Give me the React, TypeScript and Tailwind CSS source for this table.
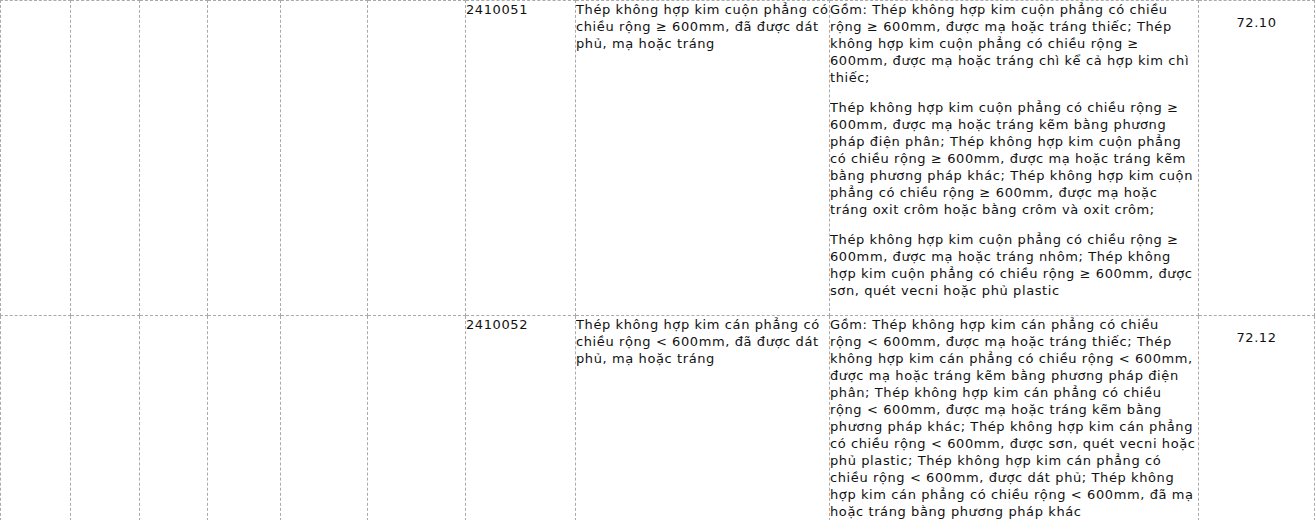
import React from 'react';

interface Row {
  code: string;
  name: string;
  // each paragraph is a list of its printed lines
  parts: string[][];
  hs: string;
}

const rows: Row[] = [
  {
    code: '2410051',
    name: 'Thép không hợp kim cuộn phẳng có chiều rộng ≥ 600mm, đã được dát phủ, mạ hoặc tráng',
    parts: [
      [
        'Gồm: Thép không hợp kim cuộn phẳng có chiều',
        'rộng ≥ 600mm, được mạ hoặc tráng thiếc; Thép',
        'không hợp kim cuộn phẳng có chiều rộng ≥',
        '600mm, được mạ hoặc tráng chì kể cả hợp kim chì',
        'thiếc;',
      ],
      [
        'Thép không hợp kim cuộn phẳng có chiều rộng ≥',
        '600mm, được mạ hoặc tráng kẽm bằng phương',
        'pháp điện phân; Thép không hợp kim cuộn phẳng',
        'có chiều rộng ≥ 600mm, được mạ hoặc tráng kẽm',
        'bằng phương pháp khác; Thép không hợp kim cuộn',
        'phẳng có chiều rộng ≥ 600mm, được mạ hoặc',
        'tráng oxit crôm hoặc bằng crôm và oxit crôm;',
      ],
      [
        'Thép không hợp kim cuộn phẳng có chiều rộng ≥',
        '600mm, được mạ hoặc tráng nhôm; Thép không',
        'hợp kim cuộn phẳng có chiều rộng ≥ 600mm, được',
        'sơn, quét vecni hoặc phủ plastic',
      ],
    ],
    hs: '72.10',
  },
  {
    code: '2410052',
    name: 'Thép không hợp kim cán phẳng có chiều rộng < 600mm, đã được dát phủ, mạ hoặc tráng',
    parts: [
      [
        'Gồm: Thép không hợp kim cán phẳng có chiều',
        'rộng < 600mm, được mạ hoặc tráng thiếc; Thép',
        'không hợp kim cán phẳng có chiều rộng < 600mm,',
        'được mạ hoặc tráng kẽm bằng phương pháp điện',
        'phân; Thép không hợp kim cán phẳng có chiều',
        'rộng < 600mm, được mạ hoặc tráng kẽm bằng',
        'phương pháp khác; Thép không hợp kim cán phẳng',
        'có chiều rộng < 600mm, được sơn, quét vecni hoặc',
        'phủ plastic; Thép không hợp kim cán phẳng có',
        'chiều rộng < 600mm, được dát phủ; Thép không',
        'hợp kim cán phẳng có chiều rộng < 600mm, đã mạ',
        'hoặc tráng bằng phương pháp khác',
      ],
    ],
    hs: '72.12',
  },
];

const cell = 'border border-dashed border-[#aaaaaa] p-0 align-top';

const Lines: React.FC<{ lines: string[] }> = ({ lines }) => (
  <>
    {lines.map((l, i) => (
      <React.Fragment key={i}>
        {i > 0 && <br />}
        {l}
      </React.Fragment>
    ))}
  </>
);

const App: React.FC = () => {
  return (
    <div className="bg-white h-[520px] overflow-hidden font-['DejaVu_Sans',Verdana,sans-serif] text-[13px] leading-[17px] tracking-[0.6px] text-[#111]">
      <table className="table-fixed border-collapse w-[1314px]">
        <colgroup>
          <col className="w-[70px]" />
          <col className="w-[69px]" />
          <col className="w-[68px]" />
          <col className="w-[73px]" />
          <col className="w-[87px]" />
          <col className="w-[98px]" />
          <col className="w-[110px]" />
          <col className="w-[254px]" />
          <col className="w-[369px]" />
          <col className="w-[116px]" />
        </colgroup>
        <tbody>
          {rows.map((row) => (
            <tr key={row.code}>
              <td className={cell}></td>
              <td className={cell}></td>
              <td className={cell}></td>
              <td className={cell}></td>
              <td className={cell}></td>
              <td className={cell}></td>
              <td className={cell}>{row.code}</td>
              <td className={cell}>{row.name}</td>
              <td className={cell + ' whitespace-nowrap overflow-hidden'}>
                <div>
                  <Lines lines={row.parts[0]} />
                </div>
                {row.parts.slice(1).map((p, i) => (
                  <p key={i} className="mt-[13px] mb-[13px] last:mb-[16px]">
                    <Lines lines={p} />
                  </p>
                ))}
              </td>
              <td className={cell + ' text-center'}>
                <p className="my-[13px]">{row.hs}</p>
              </td>
            </tr>
          ))}
        </tbody>
      </table>
    </div>
  );
};

export default App;
